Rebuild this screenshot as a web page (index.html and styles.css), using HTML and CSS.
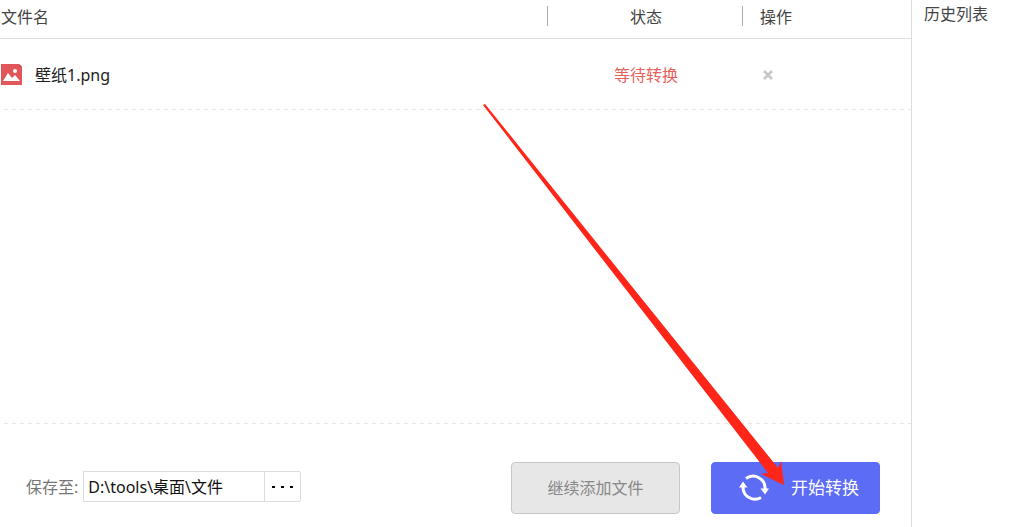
FILE: index.html
```html
<!DOCTYPE html>
<html lang="zh-CN">
<head>
    <meta charset="UTF-8">
    <meta name="viewport" content="width=device-width, initial-scale=1.0">
    <title>文件转换</title>
    <link rel="stylesheet" href="styles.css">
</head>
<body>
    <main class="convert">
        <table class="files">
            <thead>
                <tr>
                    <th class="col-name">文件名</th>
                    <th class="col-status">状态</th>
                    <th class="col-action">操作</th>
                </tr>
            </thead>
            <tbody>
                <tr>
                    <td>
                        <div class="file">
                            <svg class="file-icon" viewBox="0 0 21 21" aria-hidden="true">
                                <path fill="#e15659" d="M0 0h18l3 3v18H0z"/>
                                <path fill="#c9474c" d="M18 0v3h3z"/>
                                <path fill="#fff" d="M2 17l5-8 4 5 3-3 5 6z"/>
                                <circle fill="#fff" cx="14" cy="7" r="2"/>
                            </svg>
                            <span>壁纸1.png</span>
                        </div>
                    </td>
                    <td class="status">等待转换</td>
                    <td class="action">
                        <button class="remove" type="button" aria-label="删除">
                            <svg viewBox="0 0 10 10"><path d="M1 1l8 8M9 1l-8 8" stroke="#c8c8c8" stroke-width="2.500"/></svg>
                        </button>
                    </td>
                </tr>
            </tbody>
        </table>
        <div class="bottom">
            <div class="save">
                <label for="path">保存至:</label>
                <input id="path" type="text" value="D:\tools\桌面\文件">
                <button class="browse" type="button" aria-label="浏览">
                    <svg viewBox="0 0 22 4"><path d="M0 1h3v2H0zM9 1h3v2H9zM18 1h3v2h-3z"/></svg>
                </button>
            </div>
            <button class="btn add" type="button">继续添加文件</button>
            <button class="btn start" type="button">
                <svg viewBox="0 0 30 28" aria-hidden="true">
                    <path d="M7 4.500A12 12 0 0 1 26 15M22 23.500A12 12 0 0 1 4 13" fill="none" stroke="#fff" stroke-width="3"/>
                    <path d="M21.500 14.500h8.500l-4 6zM0 13.500h8.500l-4.500-6z" fill="#fff"/>
                </svg>
                <span>开始转换</span>
            </button>
        </div>
        <!-- 指向开始按钮的箭头 -->
        <svg class="arrow" viewBox="0 0 303 383" aria-hidden="true">
            <path fill="#ff2518" d="M0 1L2 0L295 364L298 357L301 381L278 370L285 369z"/>
        </svg>
    </main>
    <aside class="history">
        <h2>历史列表</h2>
    </aside>
</body>
</html>
```

FILE: styles.css
```css
* {
    box-sizing: border-box;
}
body {
    margin: 0;
    min-height: 100vh;
    display: flex;
    background: #fff;
    color: #444;
    font-family: "Noto Sans", "Noto Sans CJK SC", sans-serif;
    font-size: 16px;
    line-height: 24px;
}
button, input {
    font: inherit;
}
svg {
    display: block;
}
.convert {
    position: relative;
    flex: 1;
    display: flex;
    flex-direction: column;
}
.files {
    width: 100%;
    table-layout: fixed;
    border-spacing: 0;
}
.files th {
    height: 39px;
    padding: 0 0 5px 1px;
    border-bottom: 1px solid #e0e0e0;
    font-weight: normal;
    text-align: left;
}
.files td {
    height: 71px;
    padding: 0;
    color: #222;
}
.files tbody tr, .bottom {
    background: repeating-linear-gradient(90deg, transparent 0 4px, #e6e6e6 4px 8px) no-repeat 0 100% / 100% 1px;
}
.files .col-status {
    width: 195px;
    padding-left: 3px;
    text-align: center;
}
.files .col-action {
    width: 169px;
    padding-left: 18px;
}
.col-status, .col-action {
    background: linear-gradient(#aaa, #aaa) no-repeat 0 6px / 1px 20px;
}
.file {
    display: flex;
    align-items: center;
    gap: 13px;
}
.file-icon {
    width: 21px;
    height: 21px;
    margin-left: 1px;
}
.files .status {
    padding-left: 3px;
    color: #e8605a;
    text-align: center;
}
.files .action {
    padding-left: 21px;
}
.remove {
    display: block;
    width: 10px;
    height: 10px;
    padding: 0;
    border: 0;
    background: none;
    cursor: pointer;
}
.bottom {
    display: flex;
    align-items: center;
    height: 104px;
    margin-top: auto;
    padding: 25px 31px 0 26px;
    background-position: 0 0;
}
.save {
    display: flex;
    align-items: center;
    margin-right: auto;
    padding-bottom: 2px;
    color: #777;
}
.save input {
    width: 182px;
    height: 31px;
    margin-left: 5px;
    padding: 0 4px 2px;
    border: 1px solid #ddd;
    color: #111;
}
.browse {
    display: flex;
    align-items: center;
    justify-content: center;
    width: 37px;
    height: 31px;
    margin-left: -1px;
    padding: 0;
    border: 1px solid #ddd;
    border-radius: 0 2px 2px 0;
    background: #fff;
}
.browse svg {
    width: 22px;
    height: 4px;
}
.btn {
    display: flex;
    align-items: center;
    justify-content: center;
    width: 169px;
    height: 52px;
    padding: 0;
    border: 1px solid #c4c8cc;
    border-radius: 4px;
    background: #e7e7e7;
    color: #888;
    cursor: pointer;
}
.start {
    gap: 22px;
    margin-left: 31px;
    padding-left: 7px;
    border-color: #5c6cf5;
    background: #5c6cf5;
    color: #fff;
    font-size: 17px;
}
.start svg {
    width: 30px;
    height: 28px;
}
.arrow {
    position: absolute;
    top: 104px;
    right: 125px;
    width: 303px;
    height: 383px;
    pointer-events: none;
}
.history {
    width: 108px;
    padding: 2px 12px;
    border-left: 1px solid #ddd;
}
.history h2 {
    margin: 0;
    font-size: 16px;
    font-weight: normal;
}
```
